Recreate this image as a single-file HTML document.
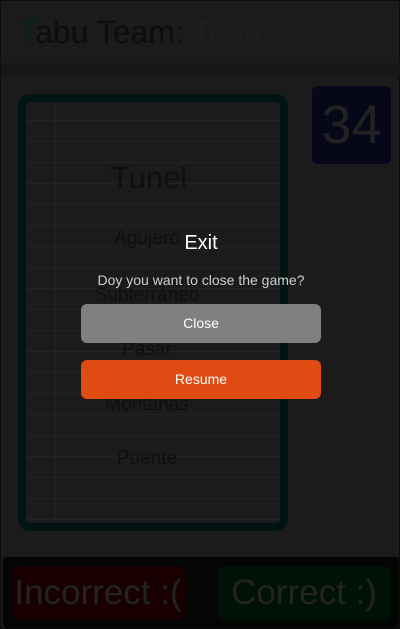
<!DOCTYPE html>
<html><head><meta charset="utf-8"><style>
*{margin:0;padding:0;box-sizing:border-box}
body{width:400px;height:629px;background:#1b1b1b;font-family:"Liberation Sans","DejaVu Sans",sans-serif;position:relative;overflow:hidden;border:1px solid #0c0c0c}
.a{position:absolute}
.title{left:18px;top:13px;font-size:32px;color:#0d0d0d;white-space:nowrap}
.band{left:0;top:62px;width:400px;height:14px;background:#171717}
.card{left:17px;top:93px;width:270px;height:437px;border:8px solid #001414;border-radius:12px;overflow:hidden;
background-color:#1b1b1b;background-image:repeating-linear-gradient(to bottom,transparent 0 20px,#232323 20px 21px);background-position:0 -2px}
.vl{left:29px;top:0;width:1px;height:100%;background:#232323}
.w{width:100%;text-align:center;color:#0f0f0f;font-size:19px;left:0}
.timer{left:311px;top:85px;width:79px;height:78px;background:#07071a;border-radius:6px;color:#222;font-size:54px;text-align:center;line-height:78px}
.bar{left:2px;top:556px;width:396px;height:71px;background:#050505;border-radius:4px}
.btn{top:565px;height:54px;width:174px;border-radius:6px;color:#232323;font-size:35px;line-height:54px;text-align:center;white-space:nowrap}
.exit{left:0;width:400px;text-align:center;color:#fff;font-size:20px;top:231px}
.q{left:0;width:400px;text-align:center;color:#cfcfcf;font-size:14px;top:271px}
.db{left:80px;width:240px;height:39px;border-radius:6px;color:#fff;font-size:14px;text-align:center;line-height:39px}
</style></head><body>
<div class="a title"><span style="color:#082020">T</span>abu Team: <span style="color:#1e1e1e">Team1</span></div>
<div class="a band"></div>
<div class="a card">
<div class="a vl"></div>
<div class="a w" style="top:58px;font-size:31px;left:-4px">Tunel</div>
<div class="a w" style="top:126px;left:-6px">Agujero</div>
<div class="a w" style="top:183px;left:-6px">Subterráneo</div>
<div class="a w" style="top:237px;left:-6px">Pasar</div>
<div class="a w" style="top:292px;left:-6px">Montanas</div>
<div class="a w" style="top:346px;left:-6px">Puente</div>
</div>
<div class="a timer">34</div>
<div class="a bar"></div>
<div class="a btn" style="left:10px;background:#180000">Incorrect :(</div>
<div class="a btn" style="left:216px;background:#001106">Correct :)</div>
<div class="a exit">Exit</div>
<div class="a q">Doy you want to close the game?</div>
<div class="a db" style="top:303px;background:#808080">Close</div>
<div class="a db" style="top:359px;background:#e04a13">Resume</div>
</body></html>
